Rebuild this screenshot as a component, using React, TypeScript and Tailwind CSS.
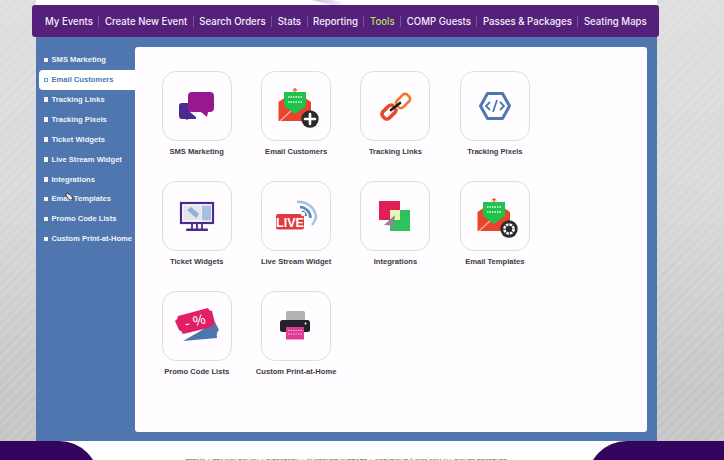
import type { ReactNode } from "react";

const NAV_ITEMS = [
  "My Events",
  "Create New Event",
  "Search Orders",
  "Stats",
  "Reporting",
  "Tools",
  "COMP Guests",
  "Passes & Packages",
  "Seating Maps",
];

function EnvelopeBase({ children }: { children: ReactNode }) {
  return (
    <svg viewBox="0 0 50 50" className="w-[50px] h-[50px]">
      <path d="M24 10 L7.5 21 V40 H40 V21 Z" fill="#e8452c" />
      <path d="M21 9.5 L24 7 L27 9.5 Z" fill="#e8452c" />
      <path d="M9 40 L21 29" stroke="#f7b6a6" strokeWidth="1.2" />
      <path d="M13 11 H35 V25 L24 33 L13 25 Z" fill="#1fc24a" />
      <path d="M17 16 H31 M17 21 H31" stroke="#b5efc6" strokeWidth="1.8" strokeDasharray="1.5 1" />
      {children}
    </svg>
  );
}

const ICONS: Record<string, ReactNode> = {
  sms: (
    <svg viewBox="0 0 50 50" className="w-[50px] h-[50px]">
      <path d="M7 25 Q7 22 10 22 H18 V31 L24 36 V38 H17 L14 39 V38 H10 Q7 38 7 35 Z" fill="#4a2a8f" />
      <path d="M16 15 Q16 11 20 11 H38 Q42 11 42 15 V27 Q42 31 38 31 H36 L35 36 L29 31 H20 Q16 31 16 27 Z" fill="#97188f" />
    </svg>
  ),
  email: (
    <EnvelopeBase>
      <circle cx="39" cy="38" r="8.7" fill="#2b2b2e" />
      <path d="M39 33 V43 M34 38 H44" stroke="#fff" strokeWidth="2.6" strokeLinecap="round" />
    </EnvelopeBase>
  ),
  link: (
    <svg viewBox="0 0 50 50" className="w-[50px] h-[50px]">
      <rect x="-7.5" y="-4.5" width="15" height="9" rx="3.5" transform="translate(19 31) rotate(-45)" fill="none" stroke="#e6492b" strokeWidth="3.6" />
      <rect x="-7.5" y="-4.5" width="15" height="9" rx="3.5" transform="translate(33 20) rotate(-45)" fill="none" stroke="#f7f2b0" strokeWidth="4.5" />
      <rect x="-7.5" y="-4.5" width="15" height="9" rx="3.5" transform="translate(33 20) rotate(-45)" fill="none" stroke="#ea6a4a" strokeWidth="2.2" />
      <path d="M21 29 L30 22" stroke="#1c1c1e" strokeWidth="2.6" strokeLinecap="round" />
    </svg>
  ),
  pixel: (
    <svg viewBox="0 0 50 50" className="w-[50px] h-[50px]">
      <path d="M17.5 12.5 H32.5 L39.5 25 L32.5 37.5 H17.5 L10.5 25 Z" fill="none" stroke="#4f76ae" strokeWidth="3" strokeLinejoin="round" />
      <path d="M20 21 L16 25 L20 29 M30 21 L34 25 L30 29 M27 19 L23 31" fill="none" stroke="#4f76ae" strokeWidth="1.8" />
    </svg>
  ),
  ticket: (
    <svg viewBox="0 0 50 50" className="w-[50px] h-[50px]">
      <rect x="9" y="12" width="32" height="20" fill="#fff" stroke="#4a2a8f" strokeWidth="2.2" />
      <rect x="11.5" y="14.5" width="18" height="15" fill="#e3e5ea" />
      <rect x="30" y="14.5" width="9" height="15" fill="#a8c0e0" />
      <path d="M15 19 L19 16 L27 23 L24 27 Z" fill="#8fb0d8" />
      <path d="M20 33 V38 M25 33 V38 M30 33 V38" stroke="#4a2a8f" strokeWidth="1.8" />
      <rect x="14" y="37.5" width="22" height="2.5" rx="1" fill="#4a2a8f" />
    </svg>
  ),
  live: (
    <svg viewBox="0 0 50 50" className="w-[50px] h-[50px]">
      <path d="M26 11 A17 17 0 0 1 45 26 A17 17 0 0 1 41 34" fill="none" stroke="#a9c3dd" strokeWidth="2.6" />
      <path d="M29 16 A11 11 0 0 1 39.5 27" fill="none" stroke="#5c88bd" strokeWidth="2.6" />
      <path d="M31 20.5 A6 6 0 0 1 35 25" fill="none" stroke="#4f76ae" strokeWidth="2.4" />
      <rect x="5" y="23" width="28" height="15.5" rx="2" fill="#e13b3f" />
      <text x="19" y="35.5" textAnchor="middle" fontFamily="Liberation Sans, sans-serif" fontWeight="700" fontSize="12.5" fill="#fff">LIVE</text>
      <circle cx="32" cy="23" r="2.2" fill="#fff" />
    </svg>
  ),
  integrations: (
    <svg viewBox="0 0 50 50" className="w-[50px] h-[50px]">
      <rect x="9" y="10" width="21" height="19" fill="#df1f56" />
      <rect x="20" y="19" width="20" height="21" fill="#2fc25a" />
      <rect x="20" y="19" width="10" height="10" fill="#e9f5b8" />
      <path d="M25 24 L14 34 L21 34.5 L23 39 Z" fill="#8a8b91" />
    </svg>
  ),
  templates: (
    <EnvelopeBase>
      <circle cx="39" cy="38" r="8.7" fill="#2b2b2e" />
      <circle cx="39" cy="38" r="4.6" fill="none" stroke="#fff" strokeWidth="2.6" strokeDasharray="2.6 1" />
    </EnvelopeBase>
  ),
  promo: (
    <svg viewBox="0 0 50 50" className="w-[50px] h-[50px]">
      <path d="M11 40 L45 37 Q44 31 47 29 L43 21 L25 32 Z" fill="#4f76ae" />
      <path d="M6 15 L36 7 Q37 10 40 10 L43 22 Q40 24 40 26 L11 33 Q10 30 7 29 L3 20 Q6 18 6 15 Z" fill="#df1f66" />
      <text x="23" y="25" textAnchor="middle" fontFamily="Liberation Sans, sans-serif" fontSize="14" fill="#fff" transform="rotate(-14 23 20)">- %</text>
    </svg>
  ),
  print: (
    <svg viewBox="0 0 50 50" className="w-[50px] h-[50px]">
      <rect x="15" y="10" width="19" height="10" rx="1.5" fill="#b3b3b5" />
      <rect x="9" y="19" width="30" height="12" rx="2.5" fill="#222228" />
      <circle cx="34.5" cy="22.5" r="1" fill="#fff" />
      <rect x="15" y="26" width="18" height="12.5" fill="#e03a97" />
      <path d="M17 29.5 H31 M17 33 H31" stroke="#f6b4d8" strokeWidth="1.2" strokeDasharray="1.5 1" />
    </svg>
  ),
};

const TOOLS = [
  { label: "SMS Marketing", icon: "sms" },
  { label: "Email Customers", icon: "email" },
  { label: "Tracking Links", icon: "link" },
  { label: "Tracking Pixels", icon: "pixel" },
  { label: "Ticket Widgets", icon: "ticket" },
  { label: "Live Stream Widget", icon: "live" },
  { label: "Integrations", icon: "integrations" },
  { label: "Email Templates", icon: "templates" },
  { label: "Promo Code Lists", icon: "promo" },
  { label: "Custom Print-at-Home", icon: "print" },
];

export default function App() {
  return (
    <div className="relative w-[724px] h-[460px] overflow-hidden flex flex-col font-['Liberation_Sans',sans-serif] bg-[repeating-linear-gradient(135deg,rgba(255,255,255,0.1)_0px,rgba(255,255,255,0.1)_3px,transparent_3px,transparent_7px),linear-gradient(180deg,#dededf_0%,#d8d8da_45%,#c6c6c6_85%,#c4c4c4_100%)]">
      {/* top strip behind the nav */}
      <div className="absolute left-[36px] top-0 w-[621px] h-[6px] bg-white overflow-hidden">
        <div className="absolute left-[270px] -top-[2px] w-[36px] h-[5px] rotate-[14deg] bg-gradient-to-r from-[#c4abdf] to-[#f4f0f8]" />
      </div>

      {/* main nav */}
      <nav className="relative mt-[5px] ml-[32px] w-[627px] h-[32px] shrink-0 rounded-[3px] bg-[#55207a] flex items-center pl-[13px] font-['Inter',sans-serif] text-[9.65px] font-medium text-[#f4eef8] whitespace-nowrap">
        {NAV_ITEMS.map((item, i) => (
          <span
            key={item}
            className={`px-[5.5px] leading-[11px] border-[#7a4f9b] ${i > 0 ? "border-l" : ""} ${item === "Tools" ? "text-[#b5dc6a]" : ""} ${i === 0 ? "pl-0" : ""}`}
          >
            {item}
          </span>
        ))}
      </nav>

      {/* panel */}
      <div className="relative ml-[36px] w-[621px] h-[404px] shrink-0 bg-[#4f76ae] flex">
        <ul className="w-[99px] shrink-0 pt-[13px] pl-[2.5px] text-[7.6px] font-bold">
          {TOOLS.map((t) => {
            const active = t.label === "Email Customers";
            return (
              <li
                key={t.label}
                className={`h-[19.9px] flex items-center gap-[3.5px] pl-[5px] whitespace-nowrap rounded-l-[4px] ${active ? "bg-white text-[#4f76ae]" : "text-[#f2f4f8]"}`}
              >
                <span className={`w-[4.5px] h-[4.5px] shrink-0 ${active ? "border border-[#7f97bd] bg-white" : "bg-[#f2f4f8]"}`} />
                {t.label}
              </li>
            );
          })}
        </ul>

        <div className="w-[512px] h-[385px] mt-[10px] bg-[#fffdff] rounded-[3px] pl-[12px] pt-[24px]">
          <div className="grid grid-cols-[repeat(4,99.4px)] auto-rows-[110px]">
            {TOOLS.map((t) => (
              <div key={t.label} className="flex flex-col items-center">
                <div className="w-[70px] h-[70px] rounded-[14px] border border-[#dedde0] flex items-center justify-center">
                  {ICONS[t.icon]}
                </div>
                <span className="mt-[6px] text-[7.6px] leading-[10px] font-bold text-[#3b3b3f] whitespace-nowrap">
                  {t.label}
                </span>
              </div>
            ))}
          </div>
        </div>

        {/* mouse pointer captured over the sidebar */}
        <svg viewBox="0 0 10 10" className="absolute left-[29px] top-[155px] w-[9px] h-[9px]">
          <path d="M2 1 L7 4 L9 8 L6 9 L3 7 L1 3 Z" fill="#e8e8e8" stroke="#333" strokeWidth="1" />
        </svg>
      </div>

      {/* footer */}
      <footer className="flex-1 bg-white flex justify-between overflow-hidden">
        <div className="w-[99px] h-[40px] bg-[#33055f] rounded-tr-[44px]" />
        <p className="pt-[15.5px] pl-[7px] text-[5.6px] leading-[8px] text-[#555] whitespace-nowrap">
          TERMS &nbsp;|&nbsp; PRIVACY POLICY &nbsp;|&nbsp; DIRECTORY &nbsp;|&nbsp; CUSTOMER SUPPORT &nbsp;|&nbsp; COPYRIGHT © 2009-2024 ALL RIGHTS RESERVED
        </p>
        <div className="w-[137px] h-[40px] bg-[#33055f] rounded-tl-[44px]" />
      </footer>
    </div>
  );
}
